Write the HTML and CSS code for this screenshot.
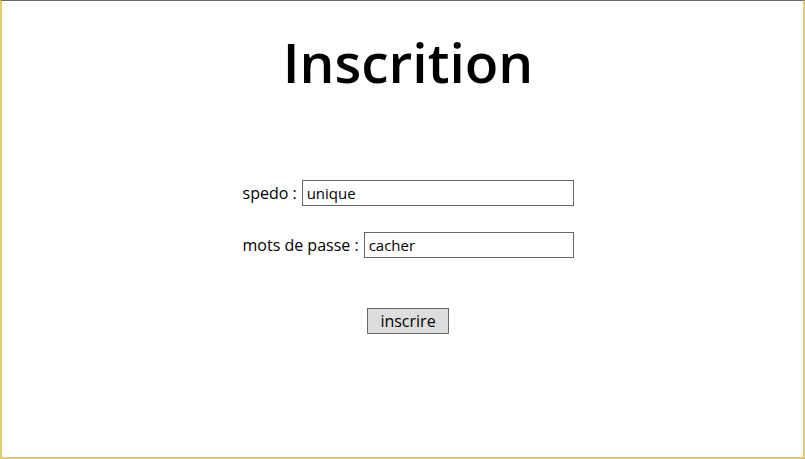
FILE: index.html
```html
<!DOCTYPE html>
<html lang="fr">
<head>
<meta charset="utf-8">
<title>Inscrition</title>
<link rel="stylesheet" href="styles.css">
</head>
<body>
<div class="frame">
  <h1 class="title">Inscrition</h1>
  <form class="form">
    <div class="row">
      <label class="label" for="spedo">spedo :</label>
      <input class="field field-long" id="spedo" type="text" value="unique">
    </div>
    <div class="row">
      <label class="label" for="pass">mots de passe :</label>
      <input class="field field-short" id="pass" type="text" value="cacher">
    </div>
    <div class="actions">
      <button class="btn" type="button">inscrire</button>
    </div>
  </form>
</div>
</body>
</html>
```
FILE: styles.css
```css
html, body {
  margin: 0;
  padding: 0;
  background: #ffffff;
}
.frame {
  box-sizing: border-box;
  width: 805px;
  height: 459px;
  border-top: 1px solid #666666;
  border-left: 2px solid #e3cb72;
  border-right: 2px solid #e3cb72;
  border-bottom: 2px solid #e3cb72;
  display: flex;
  flex-direction: column;
  align-items: center;
  padding-left: 11px;
  font-family: "Open Sans", "DejaVu Sans", sans-serif;
  font-variant-ligatures: none;
  color: #000;
}
.title {
  margin: 26px 0 0 0;
  font-size: 55px;
  font-weight: 600;
  line-height: 70px;
}
.form {
  margin-top: 83px;
  width: 331px;
  display: flex;
  flex-direction: column;
  gap: 26px;
}
.row {
  display: flex;
  align-items: center;
  height: 26px;
}
.label {
  font-size: 16px;
  margin-right: 5px;
}
.field {
  box-sizing: border-box;
  height: 26px;
  border: 1px solid #666666;
  padding: 0 4px;
  font-family: inherit;
  font-size: 15px;
  color: #000;
  flex: 1;
  outline: none;
}
.actions {
  display: flex;
  justify-content: center;
  margin-top: 24px;
}
.btn {
  box-sizing: border-box;
  width: 82px;
  height: 26px;
  background: #dddddd;
  border: 1px solid #666666;
  border-radius: 0;
  font-family: inherit;
  font-size: 16px;
  color: #000;
  padding: 0;
}
```
